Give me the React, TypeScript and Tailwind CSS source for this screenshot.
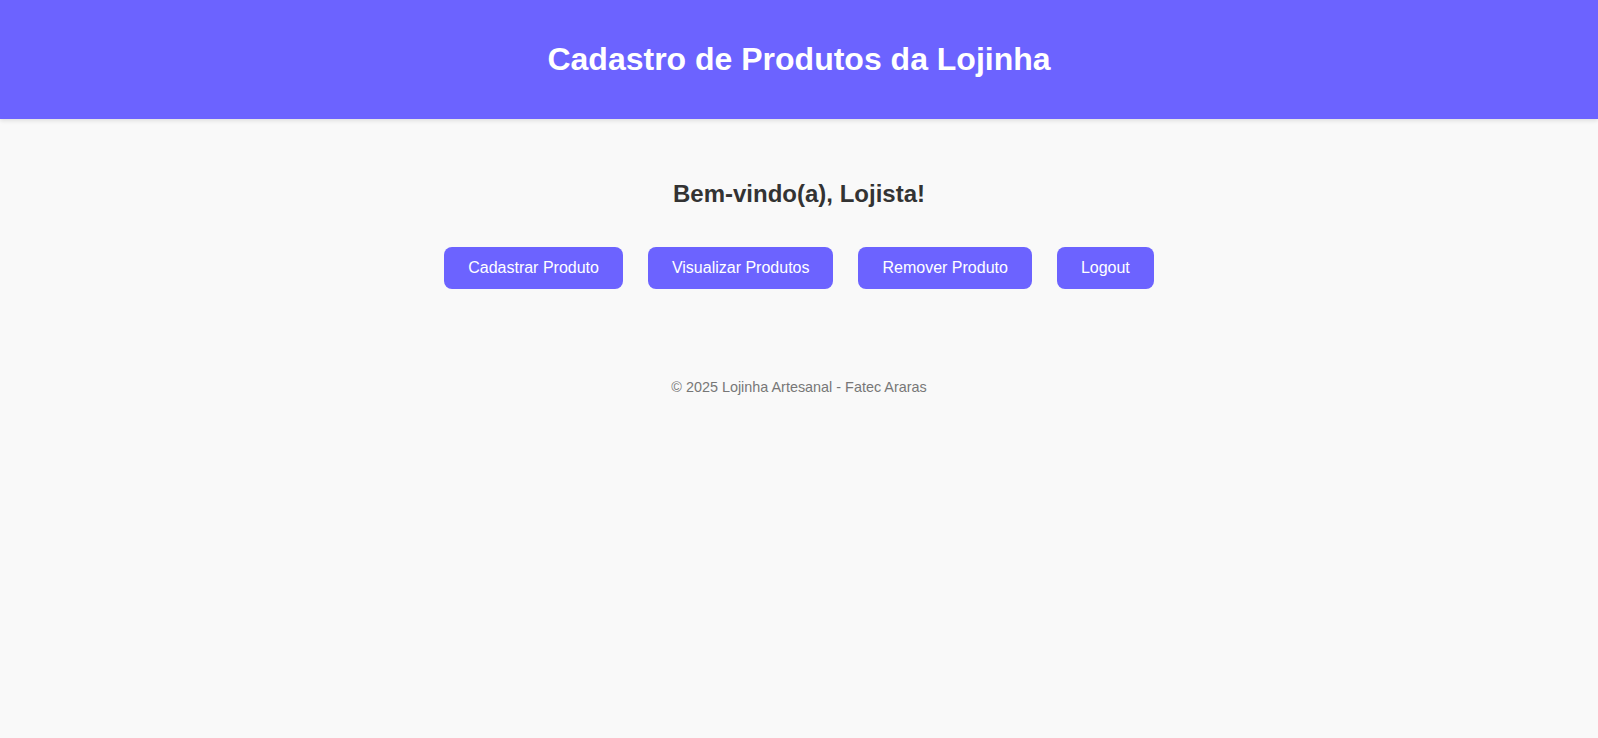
import React from "react";

const acoes = ["Cadastrar Produto", "Visualizar Produtos", "Remover Produto", "Logout"];

const App = () => {
  return (
    <div className="min-h-screen bg-[#f9f9f9] font-['Liberation_Sans',Arial,sans-serif]">
      {/* Header */}
      <header className="h-[119px] flex items-center justify-center bg-[#6c63ff] shadow-[0_2px_4px_rgba(0,0,0,0.1)]">
        <h1 className="text-[32px] leading-[37px] font-bold text-white">Cadastro de Produtos da Lojinha</h1>
      </header>

      {/* Painel */}
      <main className="flex flex-col items-center pt-[61px]">
        <h2 className="text-[24px] leading-[28px] font-bold text-[#333333]">Bem-vindo(a), Lojista!</h2>

        <div className="flex items-center gap-[25px] mt-[39px]">
          {acoes.map((a) => (
            <button
              key={a}
              className="h-[42px] px-6 rounded-lg bg-[#6c63ff] text-white text-base leading-[18px] cursor-pointer"
            >
              {a}
            </button>
          ))}
        </div>
      </main>

      {/* Footer */}
      <footer className="mt-[90px] text-center text-[14.4px] leading-4 text-[#777777]">
        © 2025 Lojinha Artesanal - Fatec Araras
      </footer>
    </div>
  );
};

export default App;
